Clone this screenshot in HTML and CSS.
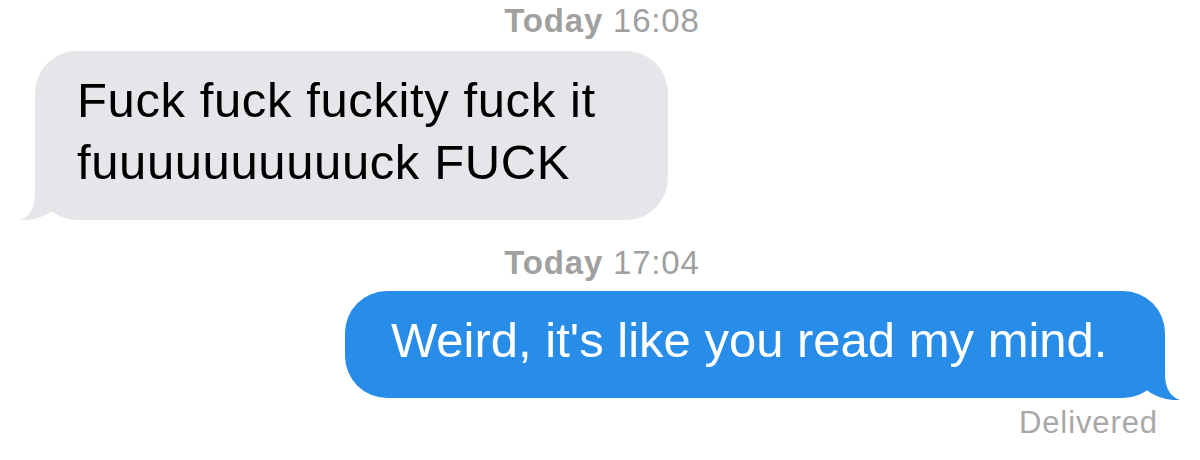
FILE: index.html
```html
<!DOCTYPE html>
<html lang="en">
<head>
<meta charset="utf-8">
<title>Messages</title>
<link rel="stylesheet" href="styles.css">
</head>
<body>
<main class="thread">
  <p class="stamp"><b>Today</b> 16:08</p>
  <div class="row row-in">
    <div class="bubble bubble-in">
      Fuck fuck fuckity fuck it fuuuuuuuuuuck FUCK
      <svg class="tail tail-in" viewBox="0 0 60 60" width="60" height="60" aria-hidden="true"><path d="M16 0 L16 34 C16 49 10 57 1 60 C12 61 25 57 33 51 L40 40 L40 0 Z"/></svg>
    </div>
  </div>
  <p class="stamp stamp-second"><b>Today</b> 17:04</p>
  <div class="row row-out">
    <div class="bubble bubble-out">
      Weird, it's like you read my mind.
      <svg class="tail tail-out" viewBox="0 0 60 60" width="60" height="60" aria-hidden="true"><path d="M16 0 L16 34 C16 49 10 57 1 60 C12 61 25 57 33 51 L40 40 L40 0 Z"/></svg>
    </div>
  </div>
  <p class="status">Delivered</p>
</main>
</body>
</html>
```
FILE: styles.css
```css
html, body {
  margin: 0;
  padding: 0;
  background: #ffffff;
}

body {
  font-family: "Liberation Sans", Arial, sans-serif;
  width: 1200px;
  height: 460px;
  overflow: hidden;
}

.thread {
  display: flex;
  flex-direction: column;
  padding: 0 35px;
}

.stamp {
  margin: 0;
  text-align: center;
  font-size: 33px;
  line-height: 41px;
  letter-spacing: 0.8px;
  color: #a0a0a0;
  padding-left: 4px;
}

.stamp b {
  font-weight: 700;
}

.stamp-second {
  margin-top: 22px;
}

.row {
  display: flex;
}

.row-in {
  justify-content: flex-start;
  margin-top: 10px;
}

.row-out {
  justify-content: flex-end;
  margin-top: 8px;
}

.bubble {
  position: relative;
  box-sizing: border-box;
  border-radius: 42px;
  font-size: 49px;
  line-height: 62px;
  padding: 18px 30px 27px 42px;
}

.bubble-in {
  width: 633px;
  background: #e5e5ea;
  color: #000000;
  letter-spacing: 0.6px;
}

.bubble-out {
  width: 820px;
  background: #288ce9;
  color: #ffffff;
  padding-left: 46px;
}

.tail {
  position: absolute;
  bottom: 0;
}

.tail-in {
  left: -16px;
  fill: #e5e5ea;
}

.tail-out {
  right: -16px;
  bottom: -2px;
  fill: #288ce9;
  transform: scaleX(-1);
}

.status {
  margin: 7px 7px 0 0;
  text-align: right;
  font-size: 31px;
  line-height: 36px;
  letter-spacing: 0.9px;
  color: #a8a8a8;
}
```
